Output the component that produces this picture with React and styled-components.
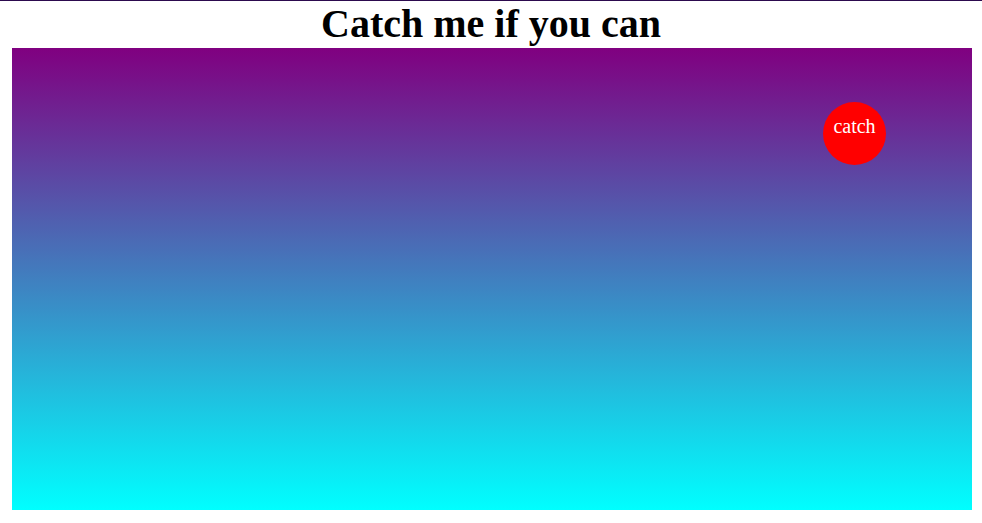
import React from "react";
import styled, { createGlobalStyle } from "styled-components";

const GlobalStyle = createGlobalStyle`
  html, body {
    margin: 0;
    padding: 0;
    background: #ffffff;
    font-family: "Liberation Serif", "Times New Roman", serif;
  }
  body {
    border-top: 1px solid #2c0a4e;
  }
`;

const Page = styled.div`
  display: flex;
  flex-direction: column;
  align-items: center;
`;

const Title = styled.h1`
  margin: 0 0 1px;
  font-size: 40px;
  line-height: 46px;
  font-weight: 700;
  color: #000000;
  text-align: center;
`;

const Field = styled.div`
  position: relative;
  align-self: flex-start;
  margin-left: 12px;
  width: 960px;
  height: 462px;
  background: linear-gradient(to bottom, #800080, #00ffff);
`;

const Target = styled.button`
  position: absolute;
  left: ${(props) => props.x}px;
  top: ${(props) => props.y}px;
  width: ${(props) => props.size}px;
  height: ${(props) => props.size}px;
  border: none;
  border-radius: 50%;
  background: #ff0000;
  color: #ffffff;
  font-family: "Liberation Serif", "Times New Roman", serif;
  font-size: 20px;
  display: flex;
  align-items: center;
  justify-content: center;
  padding: 0 0 14px;
  cursor: pointer;
`;

const App = () => {
  return (
    <Page>
      <GlobalStyle />
      <Title>Catch me if you can</Title>
      <Field>
        <Target x={811} y={54} size={63}>
          catch
        </Target>
      </Field>
    </Page>
  );
};

export default App;
